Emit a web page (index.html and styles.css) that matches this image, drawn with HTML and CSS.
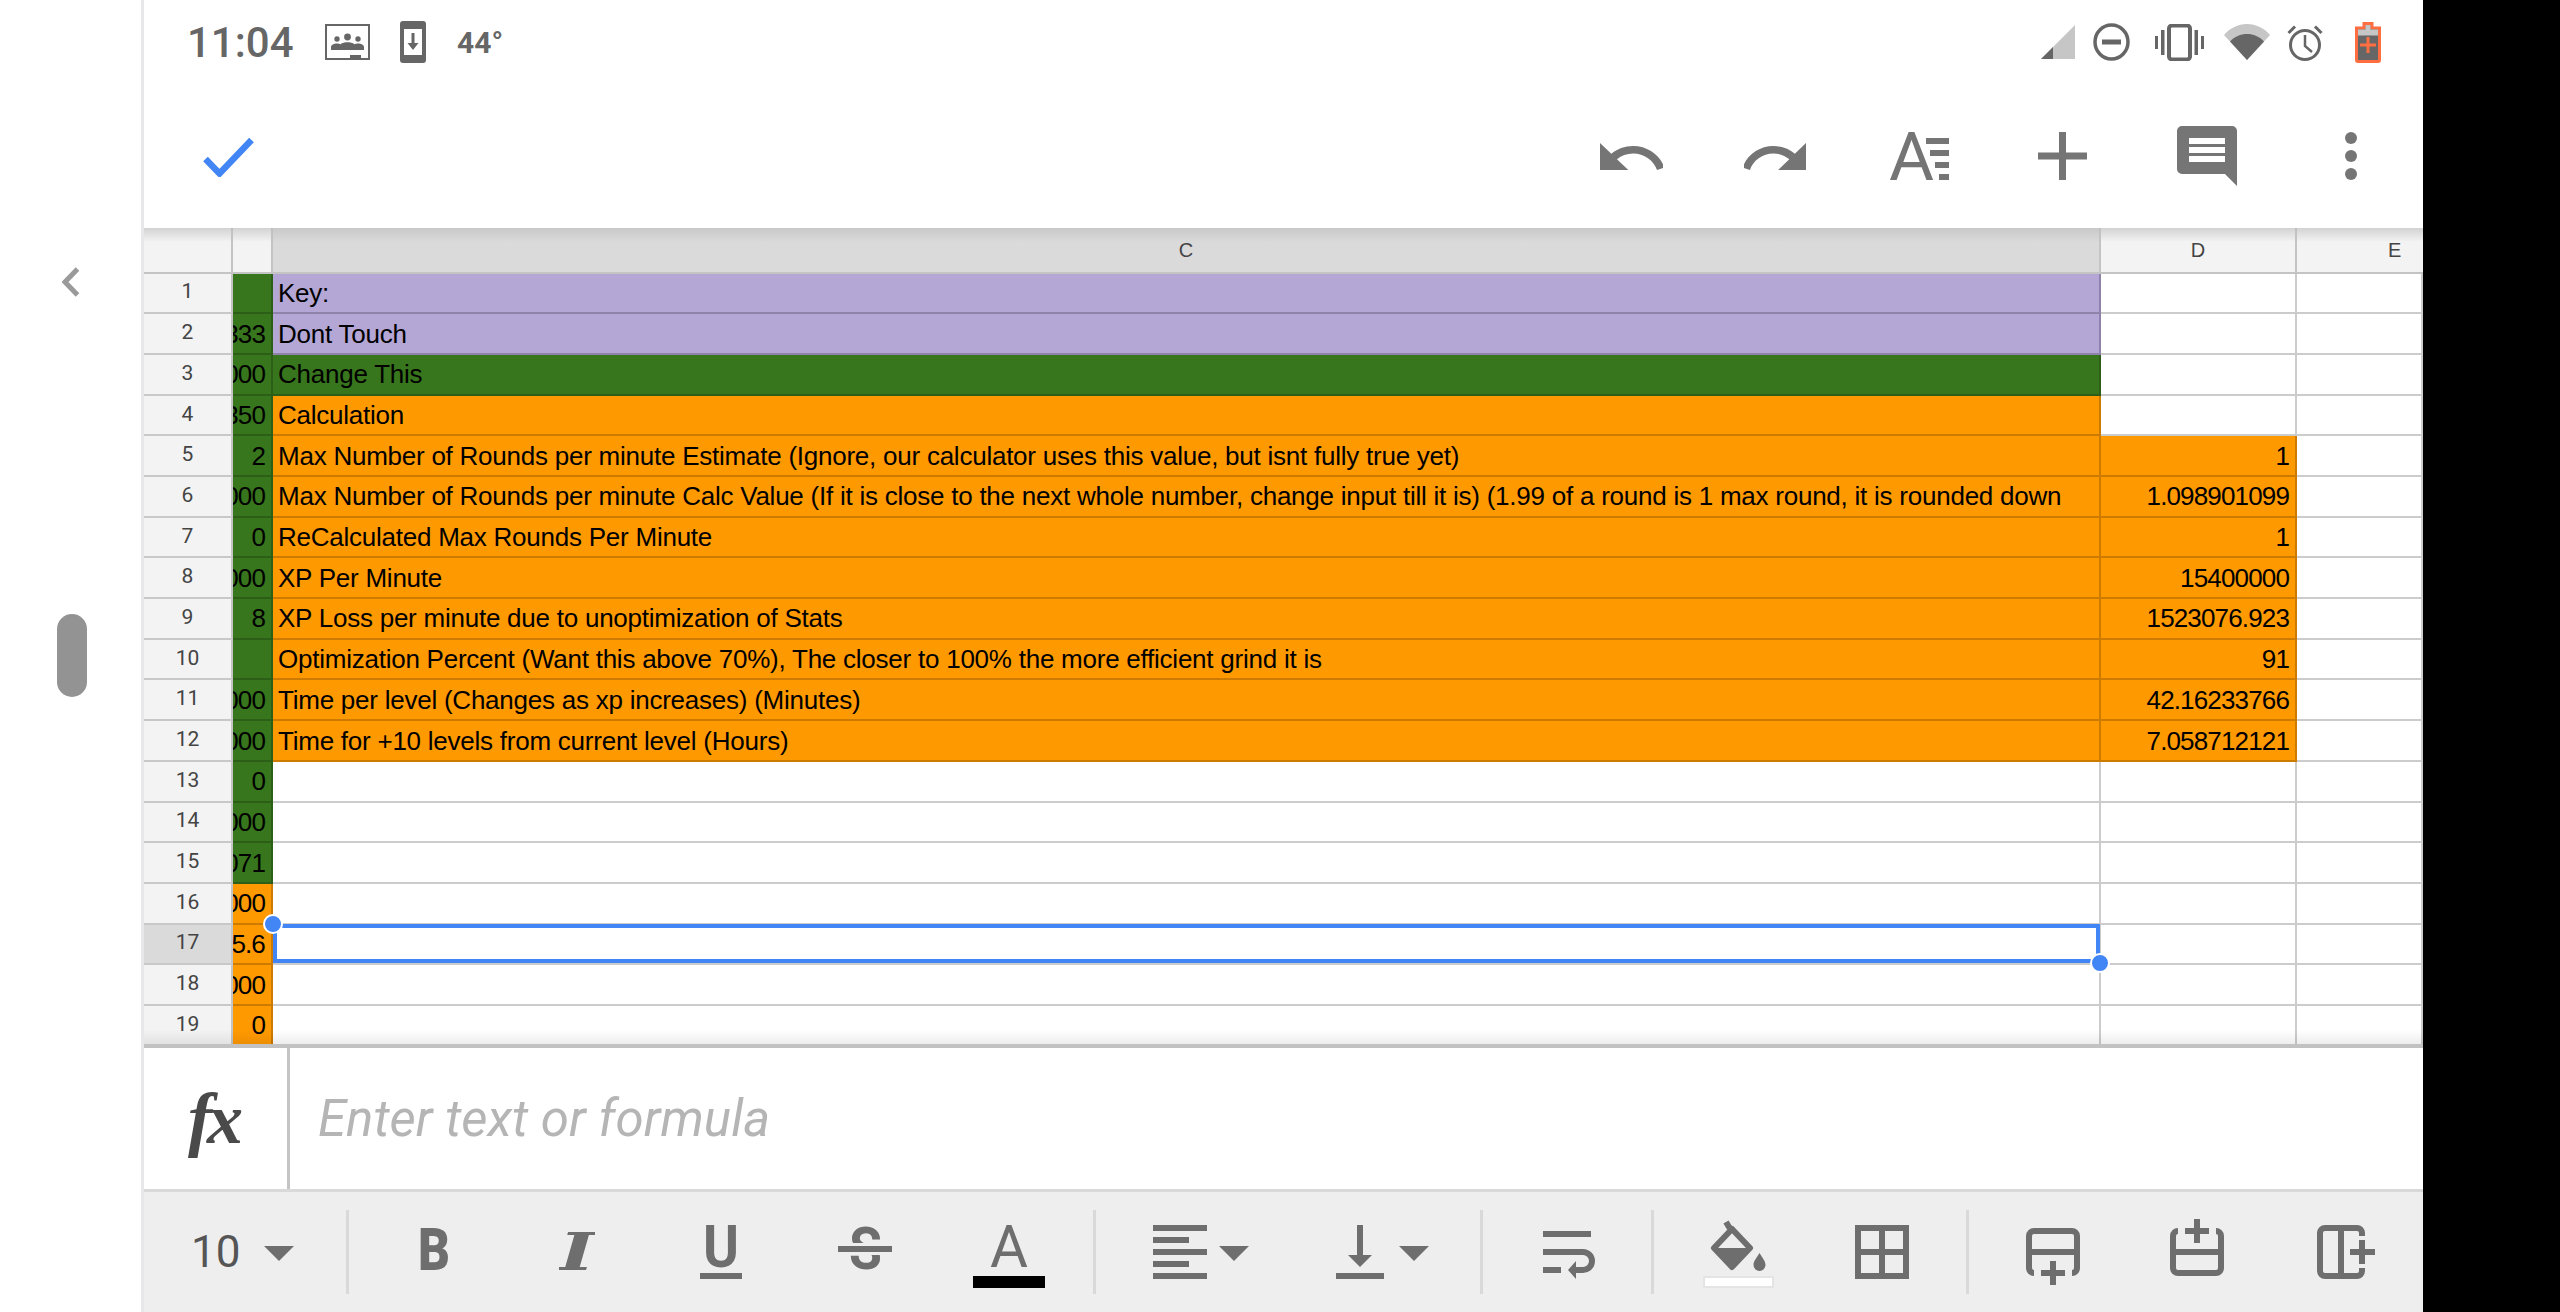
FILE: index.html
```html
<!DOCTYPE html>
<html lang="en">
<head>
<meta charset="utf-8">
<title>Sheet editor</title>
<link rel="stylesheet" href="styles.css">
</head>
<body>
<div class="screen">
  <aside class="rail">
    <svg class="chevron" viewBox="0 0 18 30"><path d="M15.500 2 3 15l12.500 13" fill="none" stroke="#9a9a9a" stroke-width="5"/></svg>
    <div class="handle"></div>
  </aside>

  <main class="app">
    <div class="status">
      <span class="time">11:04</span>
      <svg class="st-class" viewBox="0 0 45 36"><rect x="1" y="1" width="43" height="34" fill="none" stroke="#666" stroke-width="2"/><rect x="25" y="31" width="11" height="3" fill="#666"/><circle cx="22.500" cy="13" r="3.400" fill="#666"/><circle cx="12" cy="15" r="2.700" fill="#666"/><circle cx="33" cy="15" r="2.700" fill="#666"/><path d="M6 26v-3c0-2 3-3.500 6-3.500 1.500 0 2.500.3 3.500.7 1.800-1.400 4.500-2 7-2s5.200.6 7 2c1-.4 2-.7 3.500-.7 3 0 6 1.500 6 3.500v3z" fill="#666"/></svg>
      <svg class="st-phone" viewBox="0 0 26 42"><rect width="26" height="42" rx="3" fill="#666"/><rect x="4" y="8" width="18" height="26" fill="#fff"/><path d="M11.500 12h3v10h4L13 29l-5.500-7h4z" fill="#666"/></svg>
      <span class="temp">44°</span>
      <span class="status-right">
        <svg class="st-signal" viewBox="0 0 34 34"><path d="M34 0v34H0z" fill="#c6c6c6"/><path d="M12 22v12H0z" fill="#666"/></svg>
        <svg class="st-dnd" viewBox="0 0 37 38"><ellipse cx="18.500" cy="19" rx="16.500" ry="17" fill="none" stroke="#666" stroke-width="3.500"/><rect x="9" y="16.500" width="19" height="5" fill="#666"/></svg>
        <svg class="st-vib" viewBox="0 0 49 37"><rect x="14" y="1.500" width="21" height="34" rx="3" fill="none" stroke="#666" stroke-width="4"/><rect y="12" width="3" height="13" fill="#666"/><rect x="6" y="6" width="3.500" height="25" fill="#666"/><rect x="39.500" y="6" width="3.500" height="25" fill="#666"/><rect x="46" y="12" width="3" height="13" fill="#666"/></svg>
        <svg class="st-wifi" viewBox="0 0 46 36"><path d="M23 36 0 11C6 4 14 0 23 0s17 4 23 11z" fill="#c6c6c6"/><path d="M23 36 6 17.500C10.500 12.500 16.500 10 23 10s12.500 2.500 17 7.500z" fill="#666"/></svg>
        <svg class="st-alarm" viewBox="0 0 36 37"><ellipse cx="18" cy="21" rx="14.500" ry="14.500" fill="none" stroke="#666" stroke-width="3"/><path d="M18 11v11l7 6" fill="none" stroke="#666" stroke-width="2.500"/><path d="M1.500 9 8 2.500M34.500 9 28 2.500" fill="none" stroke="#666" stroke-width="3"/></svg>
        <svg class="st-batt" viewBox="0 0 26 41"><path d="M9 1.500h8V6h7.500v32a1.500 1.500 0 0 1-1.500 1.500H3A1.500 1.500 0 0 1 1.500 38V6H9z" fill="#666" stroke="#ff6e40" stroke-width="3"/><rect x="3" y="7.500" width="20" height="6" fill="#c6c6c6"/><rect x="10.500" y="3" width="5" height="5" fill="#c6c6c6"/><path d="M11.500 15h3v6.500H21v3h-6.500V31h-3v-6.500H5v-3h6.500z" fill="#ff6e40"/></svg>
      </span>
    </div>

    <div class="topbar">
      <svg class="tb-check" viewBox="0 0 51 40"><path d="M2.500 22l14 14.500L48.500 3" fill="none" stroke="#4285f4" stroke-width="6.500"/></svg>
      <span class="tb-right">
        <svg class="tb-undo" viewBox="2 7 20 9" preserveAspectRatio="none"><path d="M12.500 8c-2.650 0-5.050.99-6.900 2.600L2 7v9h9l-3.620-3.620c1.390-1.160 3.160-1.880 5.120-1.880 3.540 0 6.550 2.310 7.600 5.500l2.370-.78C21.080 11.030 17.150 8 12.500 8z" fill="#757575"/></svg>
        <svg class="tb-redo" viewBox="2 7 20 9" preserveAspectRatio="none"><path d="M18.400 10.600C16.550 8.990 14.150 8 11.500 8c-4.650 0-8.580 3.030-9.960 7.220L3.900 16c1.050-3.190 4.050-5.500 7.600-5.500 1.950 0 3.730.72 5.120 1.880L13 16h9V7l-3.600 3.600z" fill="#757575"/></svg>
        <svg class="tb-text" viewBox="0 0 60 48"><text class="ico-a" x="0" y="48" textLength="45" lengthAdjust="spacingAndGlyphs">A</text><rect x="37" y="6" width="23" height="6" fill="#757575"/><rect x="41" y="18" width="19" height="6" fill="#757575"/><rect x="46" y="30" width="14" height="6" fill="#757575"/><rect x="50" y="42" width="10" height="6" fill="#757575"/></svg>
        <svg class="tb-plus" viewBox="0 0 49 48"><rect x="21" width="7" height="48" fill="#757575"/><rect y="20.500" width="49" height="7" fill="#757575"/></svg>
        <svg class="tb-comment" viewBox="0 0 60 60"><path d="M5 0h50a5 5 0 0 1 5 5v55L48 48H5a5 5 0 0 1-5-5V5a5 5 0 0 1 5-5z" fill="#757575"/><rect x="12" y="12" width="36" height="6" fill="#fff"/><rect x="12" y="21" width="36" height="6" fill="#fff"/><rect x="12" y="30" width="36" height="6" fill="#fff"/></svg>
        <svg class="tb-dots" viewBox="0 0 14 48"><circle cx="7" cy="6" r="6" fill="#757575"/><circle cx="7" cy="24" r="6" fill="#757575"/><circle cx="7" cy="42" r="6" fill="#757575"/></svg>
      </span>
    </div>

    <section class="sheet">
      <div class="grid">
        <div class="hd"></div><div class="hd"></div><div class="hd hd-sel">C</div><div class="hd">D</div><div class="hd hd-e">E</div>

        <div class="rn">1</div><div class="c g num"></div><div class="c p">Key:</div><div class="c"></div><div class="c"></div>
        <div class="rn">2</div><div class="c g num">1333</div><div class="c p">Dont Touch</div><div class="c"></div><div class="c"></div>
        <div class="rn">3</div><div class="c g num">1000</div><div class="c g">Change This</div><div class="c"></div><div class="c"></div>
        <div class="rn">4</div><div class="c g num">1350</div><div class="c o">Calculation</div><div class="c"></div><div class="c"></div>
        <div class="rn">5</div><div class="c g num">2</div><div class="c o">Max Number of Rounds per minute Estimate (Ignore, our calculator uses this value, but isnt fully true yet)</div><div class="c o num">1</div><div class="c"></div>
        <div class="rn">6</div><div class="c g num">1000</div><div class="c o">Max Number of Rounds per minute Calc Value (If it is close to the next whole number, change input till it is) (1.99 of a round is 1 max round, it is rounded down</div><div class="c o num">1.098901099</div><div class="c"></div>
        <div class="rn">7</div><div class="c g num">0</div><div class="c o">ReCalculated Max Rounds Per Minute</div><div class="c o num">1</div><div class="c"></div>
        <div class="rn">8</div><div class="c g num">1000</div><div class="c o">XP Per Minute</div><div class="c o num">15400000</div><div class="c"></div>
        <div class="rn">9</div><div class="c g num">8</div><div class="c o">XP Loss per minute due to unoptimization of Stats</div><div class="c o num">1523076.923</div><div class="c"></div>
        <div class="rn">10</div><div class="c g num"></div><div class="c o">Optimization Percent (Want this above 70%), The closer to 100% the more efficient grind it is</div><div class="c o num">91</div><div class="c"></div>
        <div class="rn">11</div><div class="c g num">1000</div><div class="c o">Time per level (Changes as xp increases) (Minutes)</div><div class="c o num">42.16233766</div><div class="c"></div>
        <div class="rn">12</div><div class="c g num">1000</div><div class="c o">Time for +10 levels from current level (Hours)</div><div class="c o num">7.058712121</div><div class="c"></div>
        <div class="rn">13</div><div class="c g num">0</div><div class="c"></div><div class="c"></div><div class="c"></div>
        <div class="rn">14</div><div class="c g num">1000</div><div class="c"></div><div class="c"></div><div class="c"></div>
        <div class="rn">15</div><div class="c g num">1071</div><div class="c"></div><div class="c"></div><div class="c"></div>
        <div class="rn">16</div><div class="c o num">1000</div><div class="c"></div><div class="c"></div><div class="c"></div>
        <div class="rn rn-sel">17</div><div class="c o num">15.6</div><div class="c c-sel"><div class="sel"><i class="knob knob-a"></i><i class="knob knob-b"></i></div></div><div class="c"></div><div class="c"></div>
        <div class="rn">18</div><div class="c o num">1000</div><div class="c"></div><div class="c"></div><div class="c"></div>
        <div class="rn">19</div><div class="c o num">0</div><div class="c"></div><div class="c"></div><div class="c"></div>
      </div>
      <div class="shade-top"></div>
      <div class="shade-bottom"></div>
    </section>

    <div class="formula">
      <span class="fx">fx</span>
      <span class="placeholder">Enter text or formula</span>
    </div>

    <div class="tools">
      <span class="size">10</span>
      <svg class="t caret m-26" viewBox="0 0 30 84"><path d="M0 36h30L15 51z"/></svg>
      <i class="sep m-52"></i>
      <svg class="t w32 m-69" viewBox="0 0 32 84"><text class="t-b" x="0" y="60" textLength="32" lengthAdjust="spacingAndGlyphs">B</text></svg>
      <svg class="t w36 m-109" viewBox="0 0 36 84"><text class="t-i" x="0" y="60" textLength="36" lengthAdjust="spacingAndGlyphs">I</text></svg>
      <svg class="t w42 m-105" viewBox="0 0 42 84"><text class="t-u" x="3" y="57" textLength="36" lengthAdjust="spacingAndGlyphs">U</text><rect y="63" width="42" height="6"/></svg>
      <svg class="t w54 m-96" viewBox="0 0 54 84"><text class="t-u" x="11" y="59" textLength="33" lengthAdjust="spacingAndGlyphs">S</text><rect y="33" width="54" height="12" class="bgfill"/><rect y="36" width="54" height="6"/></svg>
      <svg class="t w72 m-81" viewBox="0 0 72 84"><text class="t-a" x="17" y="57" textLength="38" lengthAdjust="spacingAndGlyphs">A</text><rect y="66" width="72" height="12" class="black"/></svg>
      <i class="sep m-48"></i>
      <svg class="t w54 m-57" viewBox="0 0 54 84"><rect y="15" width="54" height="6"/><rect y="27" width="36" height="6"/><rect y="39" width="54" height="6"/><rect y="51" width="36" height="6"/><rect y="63" width="54" height="6"/></svg>
      <svg class="t caret m-12" viewBox="0 0 30 84"><path d="M0 36h30L15 51z"/></svg>
      <svg class="t w48 m-87" viewBox="0 0 48 84"><rect x="21" y="15" width="6" height="31"/><path d="M12 45h24L24 57z"/><rect y="63" width="48" height="6"/></svg>
      <svg class="t caret m-15" viewBox="0 0 30 84"><path d="M0 36h30L15 51z"/></svg>
      <i class="sep m-51"></i>
      <svg class="t w52 m-60" viewBox="0 0 52 84"><rect y="21" width="48" height="6"/><rect y="57" width="18" height="6"/><path class="ln" d="M0 42h40a9 9 0 0 1 0 18h-9"/><path d="M33 51l-8 9 8 9z"/></svg>
      <i class="sep m-56"></i>
      <svg class="t w71 m-49" viewBox="0 0 71 84"><path class="ln" d="M23 12l6 10M29 19 47 38 29 57 11 38z" stroke-linejoin="round"/><path d="M11 38h36L29 58z"/><path d="M56.500 43c3 5 6 8 6 12a6 6 0 0 1-12 0c0-4 3-7 6-12z"/><rect x="1" y="67" width="69" height="10" class="swatch"/></svg>
      <svg class="t w54 m-81" viewBox="0 0 54 84"><path class="ln" d="M3 18h48v48H3zM3 42h48M27 18v48"/></svg>
      <i class="sep m-57"></i>
      <svg class="t w54 m-57" viewBox="0 0 54 84"><path class="ln" d="M8 63a5 5 0 0 1-5-5V26a5 5 0 0 1 5-5h38a5 5 0 0 1 5 5v32a5 5 0 0 1-5 5M3 42h48"/><rect x="24" y="51" width="6" height="24"/><rect x="15" y="60" width="24" height="6"/></svg>
      <svg class="t w54 m-90" viewBox="0 0 54 84"><path class="ln" d="M8 21a5 5 0 0 0-5 5v32a5 5 0 0 0 5 5h38a5 5 0 0 0 5-5V26a5 5 0 0 0-5-5M3 42h48"/><rect x="24" y="9" width="6" height="24"/><rect x="15" y="18" width="24" height="6"/></svg>
      <svg class="t w58 m-93" viewBox="0 0 58 84"><path class="ln" d="M45 26v-3a5 5 0 0 0-5-5H8a5 5 0 0 0-5 5v38a5 5 0 0 0 5 5h32a5 5 0 0 0 5-5v-3M24 18v48"/><rect x="42" y="30" width="6" height="24"/><rect x="33" y="39" width="25" height="6"/></svg>
    </div>
  </main>

  <div class="blackout"></div>
</div>
</body>
</html>
```
FILE: styles.css
```css
* { box-sizing: border-box; }
html, body { margin: 0; padding: 0; height: 100%; }
body { background: #fff; font-family: Roboto, "Liberation Sans", sans-serif; overflow: hidden; }
svg { display: block; flex: none; }

.screen { display: flex; width: 2560px; height: 1312px; }

/* Left edge of the split-screen */
.rail { width: 144px; flex: none; background: #fff; border-right: 3px solid #e8e8ec; padding: 267px 0 0 62px; }
.chevron { width: 18px; height: 30px; }
.handle { width: 30px; height: 83px; margin: 317px 0 0 -5px; border-radius: 15px; background: #939393; }

.blackout { width: 137px; flex: none; background: #000; }

.app { width: 2279px; flex: none; display: flex; flex-direction: column; background: #fff; }

/* Status bar */
.status { height: 84px; display: flex; align-items: center; padding: 0 42px 0 43px; color: #666; }
.time { font-size: 42px; font-weight: 500; width: 106px; flex: none; }
.temp { font-size: 30px; font-weight: 700; margin-left: 31px; }
.st-class { width: 45px; height: 36px; margin-left: 32px; }
.st-phone { width: 26px; height: 42px; margin-left: 30px; }
.status-right { margin-left: auto; display: flex; align-items: center; }
.st-signal { width: 34px; height: 34px; }
.st-dnd { width: 37px; height: 38px; margin-left: 18px; }
.st-vib { width: 49px; height: 37px; margin-left: 25px; }
.st-wifi { width: 46px; height: 36px; margin-left: 20px; }
.st-alarm { width: 36px; height: 37px; margin-left: 17px; }
.st-batt { width: 26px; height: 41px; margin-left: 32px; }

/* Action bar */
.topbar { height: 144px; display: flex; align-items: center; padding: 0 65px 0 59px; }
.tb-check { width: 51px; height: 40px; margin-top: 2px; }
.tb-right { margin-left: auto; display: flex; align-items: center; }
.tb-undo { width: 63px; height: 27px; margin-top: 1px; }
.tb-redo { width: 62px; height: 27px; margin: 1px 0 0 81px; }
.tb-text { width: 60px; height: 48px; margin-left: 83px; }
.tb-plus { width: 49px; height: 48px; margin-left: 89px; }
.tb-comment { width: 60px; height: 60px; margin-left: 90px; }
.tb-dots { width: 14px; height: 48px; margin-left: 107px; }
.ico-a { font: 400 67px Roboto, sans-serif; fill: #757575; }

/* Sheet grid */
.sheet { position: relative; height: 820px; overflow: hidden; border-bottom: 4px solid #c2c2c2; }
.grid {
  display: grid;
  grid-template-columns: 89px 40px 1828px 196px 126px;
  grid-template-rows: 45.6px repeat(19, 40.7px);
  font-family: "Liberation Sans", Arial, sans-serif;
  font-size: 26px;
  letter-spacing: -0.24px;
  color: #000;
}
.hd { background: #f3f3f3; border-right: 2px solid #c4c4c4; border-bottom: 2px solid #c4c4c4; display: flex; align-items: center; justify-content: center; font-size: 20px; letter-spacing: 0; color: #444; padding-top: 2px; }
.hd-sel { background: #dadada; }
.hd-e { justify-content: flex-start; padding-left: 91px; border-right: 0; }
.rn { background: #f3f3f3; border-right: 2px solid #c4c4c4; border-bottom: 2px solid #c8c8c8; display: flex; align-items: center; justify-content: center; font-family: Roboto, sans-serif; font-size: 21px; letter-spacing: 0; color: #444; padding-bottom: 3px; }
.rn-sel { background: #dadada; }
.c { position: relative; border-right: 2px solid #ccc; border-bottom: 2px solid #ccc; display: flex; align-items: center; padding: 1px 5px 0; white-space: nowrap; overflow: hidden; min-width: 0; }
.num { justify-content: flex-end; letter-spacing: -0.85px; padding-right: 6px; }
.p { background: #b4a7d6; border-color: #9083ab; }
.g { background: #38761d; border-color: #2d5e17; }
.o { background: #f90; border-color: #cc7a00; }
.c-sel { overflow: visible; z-index: 2; }
.sel { position: absolute; top: -1px; right: -1px; bottom: 0; left: 0; border: 4px solid #4285f4; }
.knob { position: absolute; width: 20px; height: 20px; border-radius: 50%; background: #4285f4; border: 2px solid #fff; }
.knob-a { left: -14px; top: -14px; }
.knob-b { right: -14px; bottom: -14px; }
.shade-top { position: absolute; left: 0; right: 0; top: 0; height: 14px; background: linear-gradient(#bdbdbd99, #bdbdbd00); pointer-events: none; }
.shade-bottom { position: absolute; left: 0; right: 0; bottom: 0; height: 14px; background: linear-gradient(#00000000, #00000012); pointer-events: none; }

/* Formula bar */
.formula { height: 144px; display: flex; border-bottom: 3px solid #d9d9d9; }
.fx { width: 146px; border-right: 3px solid #c4c4c4; padding: 35px 0 0 44px; font: italic 700 72px/72px "Liberation Serif", serif; letter-spacing: -5px; color: #4a4a4a; flex: none; }
.placeholder { font: italic 400 51px/1 Roboto, sans-serif; color: #b5b5b5; margin: 45px 0 0 28px; }

/* Bottom format bar */
.tools { flex: 1; background: #eee; display: flex; align-items: center; padding-left: 47px; }
.size { font-size: 44px; color: #555; width: 47px; flex: none; }
.t { height: 84px; fill: #6e6e6e; }
.caret { width: 30px; }
.w32 { width: 32px; } .w36 { width: 36px; } .w42 { width: 42px; } .w48 { width: 48px; }
.w52 { width: 52px; } .w54 { width: 54px; } .w58 { width: 58px; } .w71 { width: 71px; } .w72 { width: 72px; }
.ln { fill: none; stroke: #6e6e6e; stroke-width: 6; }
.bgfill { fill: #eee; }
.black { fill: #000; }
.swatch { fill: #fff; stroke: #e4e4e4; stroke-width: 2; }
.t-b { font: 900 59px Roboto, sans-serif; }
.t-i { font: italic 700 52px "DejaVu Serif", serif; }
.t-u { font: 700 59px Roboto, sans-serif; }
.t-a { font: 400 59px Roboto, sans-serif; }
.sep { display: block; width: 3px; height: 84px; background: #d9d9d9; flex: none; }
.m-12 { margin-left: 12px; } .m-15 { margin-left: 15px; } .m-26 { margin-left: 26px; } .m-48 { margin-left: 48px; }
.m-49 { margin-left: 49px; } .m-51 { margin-left: 51px; } .m-52 { margin-left: 52px; } .m-56 { margin-left: 56px; }
.m-57 { margin-left: 57px; } .m-60 { margin-left: 60px; } .m-69 { margin-left: 69px; } .m-81 { margin-left: 81px; }
.m-87 { margin-left: 87px; } .m-90 { margin-left: 90px; } .m-93 { margin-left: 93px; } .m-96 { margin-left: 96px; }
.m-105 { margin-left: 105px; } .m-109 { margin-left: 109px; }
```
